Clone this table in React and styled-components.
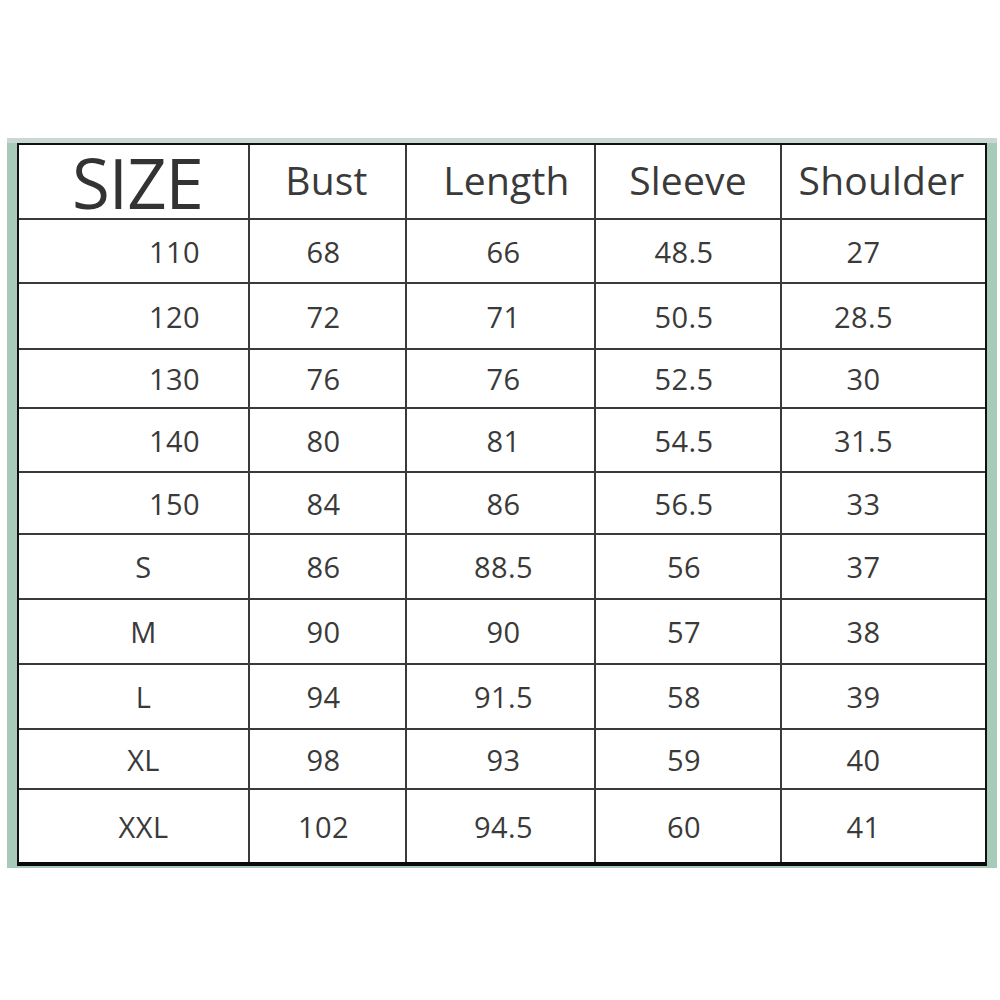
import React from "react";
import styled, { createGlobalStyle } from "styled-components";

const rows = [
  ["110", "68", "66", "48.5", "27"],
  ["120", "72", "71", "50.5", "28.5"],
  ["130", "76", "76", "52.5", "30"],
  ["140", "80", "81", "54.5", "31.5"],
  ["150", "84", "86", "56.5", "33"],
  ["S", "86", "88.5", "56", "37"],
  ["M", "90", "90", "57", "38"],
  ["L", "94", "91.5", "58", "39"],
  ["XL", "98", "93", "59", "40"],
  ["XXL", "102", "94.5", "60", "41"],
];

const rowHeights = [64, 66, 59, 64, 62, 65, 65, 65, 60, 72];

const GlobalStyle = createGlobalStyle`
  html, body {
    margin: 0;
    padding: 0;
    background: #ffffff;
  }
  body {
    width: 1000px;
    height: 1000px;
    font-family: "Open Sans", "Noto Sans", sans-serif;
  }
`;

const Page = styled.div`
  width: 1000px;
  height: 1000px;
  padding: 138px 0 0 7px;
  box-sizing: border-box;
`;

const Frame = styled.div`
  width: 990px;
  box-sizing: border-box;
  padding: 5px 10px 2px 10px;
  background: #a8cab8;
  background-image: linear-gradient(#c9d9d1 0, #c9d9d1 5px, transparent 5px);
`;

const Grid = styled.div`
  display: grid;
  grid-template-columns: 231px 157px 189px 186px 1fr;
  grid-template-rows: 75px ${rowHeights.map((h) => h + "px").join(" ")};
  background: #fff;
  border: 2px solid #111;
  border-bottom: 4px solid #0a0a0a;
  color: #3a3a3a;
`;

const Cell = styled.div`
  display: flex;
  align-items: center;
  justify-content: ${({ $align }) => ($align === "left" ? "flex-start" : "center")};
  padding-left: ${({ $pl }) => $pl || 0}px;
  padding-right: ${({ $pr }) => $pr || 0}px;
  padding-bottom: ${({ $head }) => ($head ? 5 : 0)}px;
  border-right: ${({ $last }) => ($last ? "0" : "2px solid #3a3a3a")};
  border-bottom: ${({ $bottom }) => ($bottom ? "0" : "2px solid #3a3a3a")};
  font-size: ${({ $head }) => ($head ? 39 : 29)}px;
  line-height: 1;
  letter-spacing: ${({ $head }) => ($head ? "0.2px" : "0.4px")};
  white-space: nowrap;
  box-sizing: border-box;
`;

const SizeTitle = styled.span`
  font-size: 69px;
  letter-spacing: -1px;
  color: #333;
  margin-top: 7px;
  margin-left: 8px;
`;

const headers = ["Bust", "Length", "Sleeve", "Shoulder"];
const headPad = [{ pr: 2 }, { pl: 12 }, { pl: 0 }, { pr: 4 }];
const bodyPad = [{ pr: 8 }, { pl: 6 }, { pr: 8 }, { pr: 40 }];

export default function App() {
  return (
    <>
      <GlobalStyle />
      <Page>
        <Frame>
          <Grid>
            <Cell $head>
              <SizeTitle>SIZE</SizeTitle>
            </Cell>
            {headers.map((h, i) => (
              <Cell
                key={h}
                $head
                $last={i === 3}
                $pl={headPad[i].pl}
                $pr={headPad[i].pr}
              >
                {h}
              </Cell>
            ))}
            {rows.map((r, ri) => {
              const numeric = /^\d/.test(r[0]);
              const bottom = ri === rows.length - 1;
              return (
                <React.Fragment key={r[0]}>
                  <Cell
                    $align={numeric ? "left" : "center"}
                    $pl={numeric ? 130 : 20}
                    $bottom={bottom}
                  >
                    {r[0]}
                  </Cell>
                  {r.slice(1).map((v, ci) => (
                    <Cell
                      key={ci}
                      $last={ci === 3}
                      $bottom={bottom}
                      $pl={bodyPad[ci].pl}
                      $pr={bodyPad[ci].pr}
                    >
                      {v}
                    </Cell>
                  ))}
                </React.Fragment>
              );
            })}
          </Grid>
        </Frame>
      </Page>
    </>
  );
}
